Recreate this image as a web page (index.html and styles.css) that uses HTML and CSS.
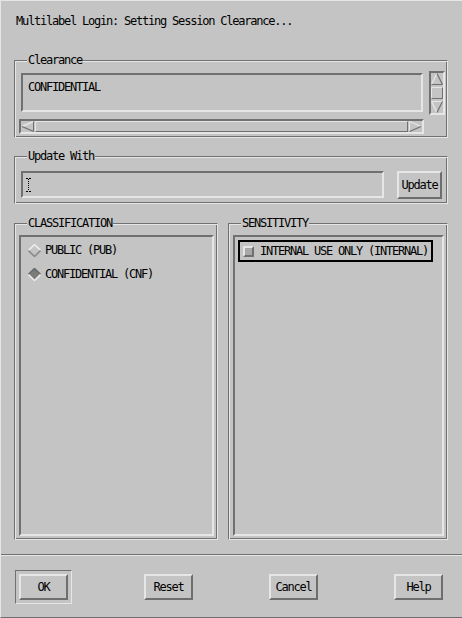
FILE: index.html
```html
<!DOCTYPE html>
<html>
<head>
<meta charset="utf-8">
<link rel="stylesheet" href="styles.css">
</head>
<body>
<div class="win">
  <div class="header">Multilabel Login: Setting Session Clearance...</div>

  <div class="frame f-clear">
    <span class="flabel">Clearance</span>
    <div class="sw">
      <div class="sw-main">
        <div class="field f-tall">CONFIDENTIAL</div>
        <div class="hscroll">
          <svg class="harrow" width="13" height="11" viewBox="0 0 13 11">
            <polygon points="1,5.5 12.5,0.5 12.5,10.5" fill="#c4c4c4"/>
            <line x1="1" y1="5.5" x2="12.5" y2="0.5" stroke="#e6e6e6" stroke-width="1.4"/>
            <line x1="1" y1="5.5" x2="12.5" y2="10.5" stroke="#707070" stroke-width="1.2"/>
            <line x1="12.5" y1="0.5" x2="12.5" y2="10.5" stroke="#707070" stroke-width="1"/>
          </svg>
          <div class="hslider"></div>
          <svg class="harrow" width="13" height="11" viewBox="0 0 13 11">
            <polygon points="12,5.5 0.5,0.5 0.5,10.5" fill="#c4c4c4"/>
            <line x1="0.5" y1="0.5" x2="0.5" y2="10.5" stroke="#e6e6e6" stroke-width="1.2"/>
            <line x1="0.5" y1="0.5" x2="12" y2="5.5" stroke="#e6e6e6" stroke-width="1.2"/>
            <line x1="0.5" y1="10.5" x2="12" y2="5.5" stroke="#707070" stroke-width="1.2"/>
          </svg>
        </div>
      </div>
      <div class="vscroll">
        <svg class="varrow" width="12" height="12" viewBox="0 0 12 12">
          <polygon points="6,0.5 0.5,11.5 11.5,11.5" fill="#c4c4c4"/>
          <line x1="6" y1="0.5" x2="0.5" y2="11.5" stroke="#e6e6e6" stroke-width="1.3"/>
          <line x1="6" y1="0.5" x2="11.5" y2="11.5" stroke="#707070" stroke-width="1.2"/>
          <line x1="0.5" y1="11.5" x2="11.5" y2="11.5" stroke="#707070" stroke-width="1"/>
        </svg>
        <div class="vslider"></div>
        <svg class="varrow" width="12" height="12" viewBox="0 0 12 12">
          <polygon points="6,11.5 0.5,0.5 11.5,0.5" fill="#c4c4c4"/>
          <line x1="0.5" y1="0.5" x2="11.5" y2="0.5" stroke="#e6e6e6" stroke-width="1"/>
          <line x1="0.5" y1="0.5" x2="6" y2="11.5" stroke="#e6e6e6" stroke-width="1.3"/>
          <line x1="11.5" y1="0.5" x2="6" y2="11.5" stroke="#707070" stroke-width="1.2"/>
        </svg>
      </div>
    </div>
  </div>

  <div class="frame f-update">
    <span class="flabel">Update With</span>
    <div class="row-update">
      <div class="field f-short">
        <svg class="ibeam" width="5" height="14" viewBox="0 0 5 14">
          <path d="M0 0.5h2M3 0.5h2M0 13.5h2M3 13.5h2" stroke="#000" stroke-width="1"/>
          <path d="M2.5 1v12" stroke="#000" stroke-width="1" stroke-dasharray="1 1"/>
        </svg>
      </div>
      <div class="btn b-update">Update</div>
    </div>
  </div>

  <div class="lists">
    <div class="frame f-class">
      <span class="flabel">CLASSIFICATION</span>
      <div class="listbox lb-class">
        <div class="opt">
          <svg class="diamond" width="13" height="13" viewBox="0 0 13 13">
            <polygon points="6.5,0.5 12.5,6.5 6.5,12.5 0.5,6.5" fill="#c4c4c4"/>
            <path d="M0.5 6.5L6.5 0.5L12.5 6.5" fill="none" stroke="#ececec" stroke-width="1.6"/>
            <path d="M0.5 6.5L6.5 12.5L12.5 6.5" fill="none" stroke="#8a8a8a" stroke-width="1.6"/>
          </svg>
          <span>PUBLIC (PUB)</span>
        </div>
        <div class="opt">
          <svg class="diamond" width="13" height="13" viewBox="0 0 13 13">
            <polygon points="6.5,0.5 12.5,6.5 6.5,12.5 0.5,6.5" fill="#7c7c7c"/>
            <path d="M0.5 6.5L6.5 0.5L12.5 6.5" fill="none" stroke="#6a6a6a" stroke-width="1.6"/>
            <path d="M0.5 6.5L6.5 12.5L12.5 6.5" fill="none" stroke="#ececec" stroke-width="1.6"/>
          </svg>
          <span>CONFIDENTIAL (CNF)</span>
        </div>
      </div>
    </div>
    <div class="frame f-sens">
      <span class="flabel">SENSITIVITY</span>
      <div class="listbox lb-sens">
        <div class="item">
          <span class="check"></span>
          <span>INTERNAL USE ONLY (INTERNAL)</span>
        </div>
      </div>
    </div>
  </div>

  <div class="sep"></div>

  <div class="buttons">
    <div class="default-ring"><div class="btn b-act">OK</div></div>
    <div class="btn b-act b-reset">Reset</div>
    <div class="btn b-act b-cancel">Cancel</div>
    <div class="btn b-act b-help">Help</div>
  </div>
</div>
</body>
</html>
```

FILE: styles.css
```css
* { box-sizing: border-box; }

html, body {
  margin: 0;
  padding: 0;
  background: #c4c4c4;
}

body {
  font-family: "DejaVu Sans Mono", "Liberation Mono", monospace;
  font-size: 12px;
  letter-spacing: -1.22px;
  color: #000;
}

.win {
  width: 462px;
  height: 618px;
  background: #c4c4c4;
  border-top: 1px solid #e6e6e6;
  border-left: 1px solid #e6e6e6;
  border-bottom: 1px solid #6e6e6e;
  display: flex;
  flex-direction: column;
}

.header {
  height: 59px;
  padding: 13px 0 0 15px;
  line-height: 14px;
  flex: none;
}

.frame {
  position: relative;
  border: 1px solid;
  border-color: #707070 #e6e6e6 #e6e6e6 #707070;
  box-shadow: inset 1px 1px 0 #e6e6e6, inset -1px -1px 0 #707070;
  flex: none;
}

.flabel {
  position: absolute;
  top: -8px;
  left: 12px;
  padding: 0 1px;
  line-height: 14px;
  background: #c4c4c4;
}

.f-clear {
  margin-left: 13px;
  width: 434px;
  height: 78px;
  padding: 10px 0 0 4px;
}

.sw {
  display: flex;
}

.sw-main {
  width: 405px;
}

.field {
  border: 2px solid;
  border-color: #707070 #e6e6e6 #e6e6e6 #707070;
}

.f-tall {
  margin: 2px 0 0 2px;
  width: 402px;
  height: 39px;
  padding: 5px 0 0 5px;
  line-height: 14px;
}

.hscroll {
  margin-top: 7px;
  width: 405px;
  height: 15px;
  border: 2px solid;
  border-color: #707070 #e6e6e6 #e6e6e6 #707070;
  display: flex;
  align-items: stretch;
}

.harrow {
  display: block;
  flex: none;
}

.hslider {
  flex: 1;
  border: 1px solid;
  border-color: #e6e6e6 #707070 #707070 #e6e6e6;
  margin: 0 1px;
}

.vscroll {
  margin-left: 5px;
  width: 16px;
  height: 44px;
  border: 2px solid;
  border-color: #707070 #e6e6e6 #e6e6e6 #707070;
  display: flex;
  flex-direction: column;
  align-items: center;
}

.varrow {
  display: block;
  flex: none;
}

.vslider {
  flex: 1;
  width: 12px;
  margin: 2px 0;
  border: 1px solid;
  border-color: #e6e6e6 #707070 #707070 #e6e6e6;
}

.f-update {
  margin: 18px 0 0 13px;
  width: 434px;
  height: 48px;
  padding: 14px 0 0 6px;
}

.row-update {
  display: flex;
  align-items: flex-start;
}

.f-short {
  width: 363px;
  height: 27px;
  padding: 5px 0 0 3px;
}

.ibeam {
  display: block;
}

.btn {
  border: 2px solid;
  border-color: #e6e6e6 #6e6e6e #6e6e6e #e6e6e6;
  display: flex;
  align-items: center;
  justify-content: center;
  line-height: 14px;
}

.b-update {
  margin-left: 13px;
  width: 45px;
  height: 28px;
}

.lists {
  margin: 19px 0 0 13px;
  display: flex;
  gap: 10px;
  flex: none;
}

.f-class {
  width: 204px;
  height: 317px;
  padding: 11px 0 0 4px;
}

.f-sens {
  width: 220px;
  height: 317px;
  padding: 11px 0 0 4px;
}

.listbox {
  height: 301px;
  border: 2px solid;
  border-color: #707070 #e6e6e6 #e6e6e6 #707070;
}

.lb-class {
  width: 195px;
  padding-top: 1px;
}

.lb-sens {
  width: 211px;
  padding: 3px 0 0 3px;
}

.opt {
  height: 24px;
  display: flex;
  align-items: center;
  padding-left: 7px;
  gap: 4px;
}

.diamond {
  display: block;
  flex: none;
}

.item {
  width: 195px;
  height: 22px;
  border: 2px solid #000;
  display: flex;
  align-items: center;
  padding-left: 3px;
  gap: 6px;
}

.check {
  width: 11px;
  height: 11px;
  background: #a8a8a8;
  border: 2px solid;
  border-color: #e6e6e6 #707070 #707070 #e6e6e6;
  flex: none;
}

.sep {
  margin-top: 14px;
  height: 2px;
  border-top: 1px solid #707070;
  border-bottom: 1px solid #e6e6e6;
  flex: none;
}

.buttons {
  margin-top: 14px;
  padding-left: 14px;
  display: flex;
  align-items: center;
  flex: none;
}

.default-ring {
  width: 57px;
  height: 34px;
  border: 1px solid;
  border-color: #707070 #e6e6e6 #e6e6e6 #707070;
  padding: 3px;
}

.b-act {
  width: 49px;
  height: 26px;
}

.b-reset { margin-left: 72px; }
.b-cancel { margin-left: 76px; }
.b-help { margin-left: 76px; }
```
